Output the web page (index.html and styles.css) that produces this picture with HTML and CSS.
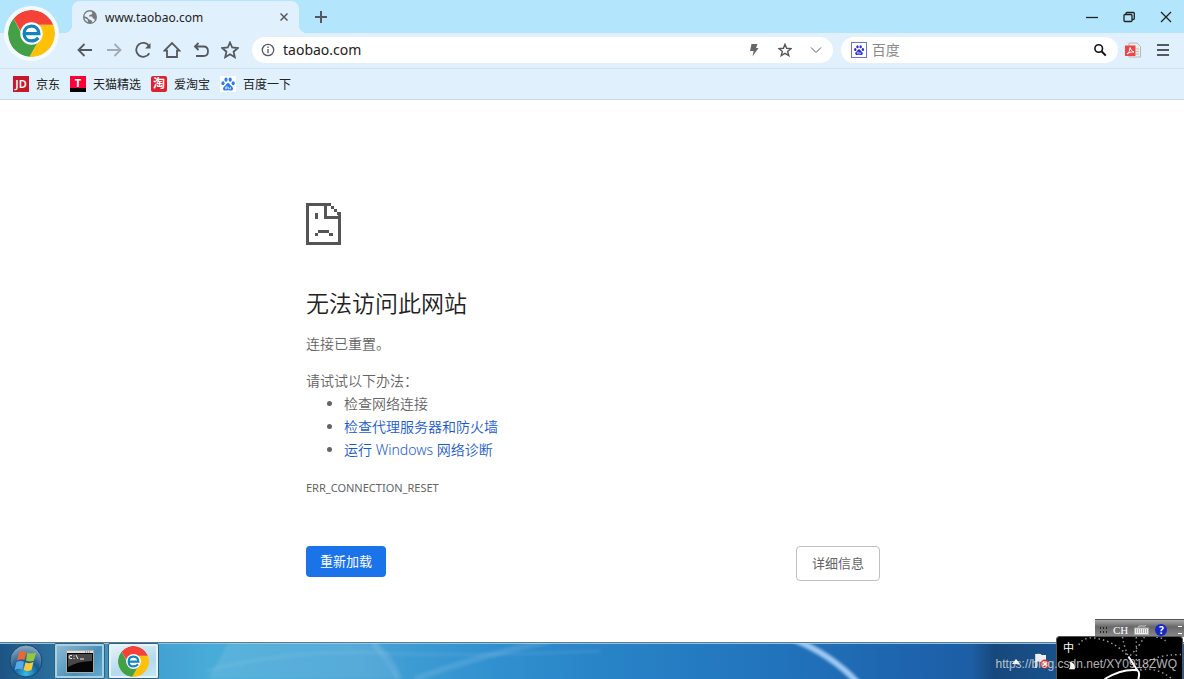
FILE: index.html
```html
<!DOCTYPE html>
<html lang="zh-CN">
<head>
<meta charset="utf-8">
<title>www.taobao.com</title>
<link rel="stylesheet" href="styles.css">
</head>
<body>
<svg class="defs" width="0" height="0" aria-hidden="true">
  <symbol id="browser-logo" viewBox="0 0 46 46">
    <path fill="#ffc107" d="M27 14.500H44.500A23 23 0 0 1 21 46L31 28Z"/>
    <path fill="#43a047" d="M5.500 8.200A23 23 0 0 0 21 46L31 28L13 23Z"/>
    <path fill="#f44336" d="M5.500 8.200A23 23 0 0 1 44.500 14.500H23L13 22Z"/>
    <circle cx="23" cy="23" r="11" fill="#fff"/>
    <path d="M15.500 23.200H30.200C30 18.400 27 15.800 23 15.800C18.600 15.800 15.800 18.800 15.800 23.200C15.800 27.800 19 30.300 23 30.300C25.800 30.300 28 29.200 29.700 27.300" fill="none" stroke="#1683bd" stroke-width="3.200"/>
  </symbol>
  <symbol id="paw" viewBox="0 0 16 16">
    <ellipse cx="3" cy="7.300" rx="1.600" ry="2"/><ellipse cx="6" cy="3.700" rx="1.600" ry="2.100"/>
    <ellipse cx="10.200" cy="3.700" rx="1.600" ry="2.100"/><ellipse cx="13.200" cy="7.300" rx="1.600" ry="2"/>
    <path d="M8 7C6.500 7 6 9 4.500 10.200C2 12 3 14.500 5.200 14.500C6.500 14.500 7 14.200 8 14.200S9.500 14.500 11 14.500C13.200 14.500 14 12 11.700 10.200C10 9 9.500 7 8 7Z"/>
    <path d="M7 10V12.800H5.500V11.300H7M8.600 11V12.800H10.500V11" fill="none" stroke="#fff" stroke-width=".7"/>
  </symbol>
</svg>
<div class="window">
  <header class="browser">
    <div class="tabs">
      <div class="tab">
        <svg class="globe" viewBox="0 0 14 14"><circle cx="7" cy="7" r="7" fill="#75797e"/><path fill="#e1f0fd" d="M8 1.500L9.500 3L8.500 4.500L6.500 5L6 6.500H9L10 8.500L11.500 9V11L9.500 12.500L8.500 10.500L5.500 9L4.500 7.500L1.500 6.300C1.500 3.500 4 1.200 8 1.500ZM1.500 8L4.500 9.500L5.200 12.300C3 11.500 1.800 10 1.500 8Z"/></svg>
        <span class="tab-title">www.taobao.com</span>
        <button class="plain tab-close" aria-label="关闭标签页"><svg viewBox="0 0 8 8"><path d="M.5.500L7.500 7.500M7.500.500L.5 7.500"/></svg></button>
      </div>
      <button class="plain new-tab" aria-label="新标签页"><svg viewBox="0 0 12 12"><path d="M6 0V12M0 6H12"/></svg></button>
      <div class="controls">
        <button class="plain" aria-label="最小化"><svg viewBox="0 0 12 12"><path d="M0 6.500H12"/></svg></button>
        <button class="plain" aria-label="还原"><svg viewBox="0 0 12 12"><rect x="1" y="3.500" width="8" height="7" rx="1"/><path d="M3 3.500V2.500Q3 1.500 4 1.500H10.500Q11.300 1.500 11.300 2.500V7.500Q11.300 8.500 10 8.500H9"/></svg></button>
        <button class="plain" aria-label="关闭"><svg viewBox="0 0 12 12"><path d="M1 1L11 11M11 1L1 11"/></svg></button>
      </div>
    </div>
    <div class="badge"><svg><use href="#browser-logo"/></svg></div>
    <div class="toolbar">
      <nav class="nav">
        <button class="plain" aria-label="后退"><svg viewBox="0 0 18 18"><path d="M16 9H3M8.500 3L2.500 9L8.500 15"/></svg></button>
        <button class="plain muted" aria-label="前进"><svg viewBox="0 0 18 18"><path d="M2 9H15M9.500 3L15.500 9L9.500 15"/></svg></button>
        <button class="plain" aria-label="刷新"><svg viewBox="0 0 18 18"><path d="M15.300 12.200A7 7 0 1 1 15.300 5.500"/><path d="M16.500 2V7.500H11Z" fill="#55595e" stroke="none"/></svg></button>
        <button class="plain" aria-label="主页"><svg viewBox="0 0 18 18"><path d="M1.500 9.700L9 2L16.500 9.700H14V16H4V9.700Z"/></svg></button>
        <button class="plain" aria-label="撤销"><svg viewBox="0 0 18 18"><path d="M6.500 2L3 5.500L6.500 9M3 5.500H11.500Q16 5.500 16 10.200T11.500 15H4"/></svg></button>
        <button class="plain" aria-label="收藏"><svg viewBox="0 0 18 18"><path d="M9 1.500L11.200 6.500L16.700 7.100L12.600 10.700L13.800 16.200L9 13.300L4.200 16.200L5.400 10.700L1.300 7.100L6.800 6.500Z"/></svg></button>
      </nav>
      <div class="field address">
        <svg class="info" viewBox="0 0 14 14"><circle cx="7" cy="7" r="5.700"/><path d="M7 6V10.200M7 3.500V5"/></svg>
        <input type="text" aria-label="地址" value="taobao.com">
        <button class="plain" aria-label="极速模式"><svg viewBox="0 0 14 14"><path d="M4.500 1H10.500L9 5H11.500L5.500 13.500L6.700 8H3Z" fill="#666" stroke="none"/></svg></button>
        <button class="plain" aria-label="添加收藏"><svg viewBox="0 0 14 14"><path d="M7 1.300L8.600 5.300L13 5.600L9.600 8.400L10.800 12.600L7 10.300L3.200 12.600L4.400 8.400L1 5.600L5.400 5.300Z" stroke-width="1.400"/></svg></button>
        <button class="plain chevron" aria-label="展开"><svg viewBox="0 0 14 14"><path d="M2 4.500L7 9.500L12 4.500" stroke-width="1"/></svg></button>
      </div>
      <div class="field search">
        <svg class="engine" viewBox="0 0 16 16"><rect x=".5" y=".5" width="15" height="15" fill="#fff" stroke="#6b70e6"/><use href="#paw" x="2" y="2" width="12" height="12" fill="#2529d8"/></svg>
        <input type="text" aria-label="搜索" placeholder="百度">
        <button class="plain find" aria-label="搜索"><svg viewBox="0 0 14 14"><circle cx="5.700" cy="5.500" r="3.800"/><path d="M8.500 8.300L12.800 12.600" stroke-width="2"/></svg></button>
      </div>
      <div class="extras">
        <button class="plain" aria-label="PDF"><svg viewBox="0 0 16 16"><path d="M4 1H12L15.500 4.500V15H4Z" fill="#eee" stroke="#b8b8b8"/><path d="M11 7H14M11 9.500H14M11 12H14" stroke="#bbb" stroke-width="1"/><rect x="0" y="3.500" width="10.500" height="10.500" fill="#ee4545" stroke="none"/><path d="M2 12Q5 10 5 5.500Q6 9.500 9 10Q5 9.500 2 12" stroke="#fff" stroke-width="1"/></svg></button>
        <button class="plain" aria-label="菜单"><svg viewBox="0 0 16 16"><path d="M2 3H14M2 8H14M2 13H14" stroke-width="2"/></svg></button>
      </div>
    </div>
    <nav class="bookmarks">
      <a href="#"><span class="mark jd">JD</span>京东</a>
      <a href="#"><span class="mark tmall">T</span>天猫精选</a>
      <a href="#"><span class="mark tao">淘</span>爱淘宝</a>
      <a href="#"><svg class="mark paw"><use href="#paw"/></svg>百度一下</a>
    </nav>
  </header>

  <main class="page">
    <div class="error">
      <svg class="sad" viewBox="0 0 103 125" preserveAspectRatio="none" shape-rendering="crispEdges">
        <path fill="#555" d="M0 0H73V9H61V40H103V125H0ZM9 9V116H94V49H52V9ZM73 9H82V18H73ZM82 18H91V27H82ZM91 27H103V40H94V35H91ZM26 31H35V49H26ZM35 81H69V90H35ZM26 90H35V99H26ZM69 90H78V99H69Z" fill-rule="evenodd"/>
      </svg>
      <h1>无法访问此网站</h1>
      <p>连接已重置。</p>
      <p class="hint">请试试以下办法：</p>
      <ul>
        <li>检查网络连接</li>
        <li><a href="#">检查代理服务器和防火墙</a></li>
        <li><a href="#">运行 Windows 网络诊断</a></li>
      </ul>
      <p class="code">ERR_CONNECTION_RESET</p>
      <div class="actions">
        <button class="reload">重新加载</button>
        <button class="details">详细信息</button>
      </div>
    </div>
  </main>

  <footer class="taskbar">
    <svg class="streaks" viewBox="0 0 1184 36" preserveAspectRatio="none">
      <defs><filter id="soft" x="-20%" y="-50%" width="140%" height="200%"><feGaussianBlur stdDeviation="1.500"/></filter></defs>
      <g filter="url(#soft)">
        <path d="M228 0H376L400 36H208Z" fill="#fff" opacity=".09"/>
        <path d="M205 28Q290 6 380 10T600 8" fill="none" stroke="#fff" stroke-width="3" opacity=".08"/>
        <path d="M373 0Q391 14 399 36" fill="none" stroke="#fff" stroke-width="7" opacity=".1"/>
        <path d="M415 36Q480 12 550 -2" fill="none" stroke="#fff" stroke-width="6" opacity=".11"/>
        <path d="M793 -4Q832 12 858 40" fill="none" stroke="#add4fa" stroke-width="6" opacity=".9"/>
      </g>
    </svg>
    <button class="plain start" aria-label="开始">
      <svg viewBox="0 0 34 34">
        <defs><radialGradient id="orb" cx=".5" cy=".9" r=".9"><stop offset="0" stop-color="#35bdea"/><stop offset=".45" stop-color="#17588f"/><stop offset="1" stop-color="#91afc4"/></radialGradient></defs>
        <circle cx="17" cy="17" r="16" fill="url(#orb)" stroke="#18466d" stroke-width="1"/>
        <g stroke="none">
          <path d="M10 8.500Q13 6.500 17 8L15.500 16Q12 14.500 8 16.500Z" fill="#f26531"/>
          <path d="M18.500 8.500Q22 10.500 27 8.500L25 16.500Q21 18.500 17 16.500Z" fill="#93c83e"/>
          <path d="M7.500 18Q11.500 16 15 17.700L13.300 25.500Q10 24 5.500 26Z" fill="#55a9ea"/>
          <path d="M16.500 18.200Q20 20.200 24.500 18L22.500 26Q18.500 28 14.700 26Z" fill="#fbc936"/>
        </g>
      </svg>
    </button>
    <button class="task" aria-label="命令提示符">
      <svg class="console" viewBox="0 0 28 23"><rect x=".5" y=".5" width="27" height="22" fill="#060606" stroke="#aaa"/><path d="M1 1H27V3H1Z" fill="#ddd"/><path d="M19 2H25" stroke="#667" stroke-dasharray="1 1"/><path d="M2 4H26V11Q12 11 2 17Z" fill="#484848"/><path d="M6 5.500Q3 5 3 7T6 8.500M8 5.500V6.500M8 8V9M10 5L12 9M14 9H18" fill="none" stroke="#eee"/></svg>
    </button>
    <button class="task active" aria-label="浏览器"><svg class="logo"><use href="#browser-logo"/></svg></button>
    <div class="tray">
      <svg class="up" viewBox="0 0 8 5"><path d="M0 5L4 0L8 5Z" fill="#fff"/></svg>
      <svg class="flag" viewBox="0 0 16 16"><path d="M2 1V15" stroke="#fff" stroke-width="1.500"/><path d="M2 1Q6 0 8 2H12V9H7Q5 8 2 9Z" fill="#eee"/><circle cx="11" cy="11" r="4.500" fill="#d92e25"/><path d="M9 9L13 13M13 9L9 13" stroke="#fff" stroke-width="1.500"/></svg>
    </div>
  </footer>

  <div class="langbar">
    <span class="grip"></span>
    <span class="lang">CH</span>
    <svg class="keys" viewBox="0 0 15 10"><path d="M4 3Q4 0 8 1T12 0" fill="none" stroke="#ccc"/><rect x=".5" y="3" width="14" height="6.500" fill="#eee" stroke="#aaa"/><path d="M2 5H13M2 7H13" stroke="#777" stroke-dasharray="1 1"/></svg>
    <span class="help">?</span>
    <span class="dash"></span>
  </div>
  <div class="ime">
    <svg viewBox="0 0 126 43" preserveAspectRatio="none">
      <g fill="none" stroke="#999" stroke-width="1.500" stroke-dasharray="1.500 3">
        <path d="M22 8Q26 0 38 1Q58 4 72 20M66 0Q68 14 78 32M80 0V30M88 0Q84 8 73 20M84 34Q92 18 125 18M100 0Q112 2 108 6M84 34Q100 30 116 43"/>
      </g>
      <path d="M48 43Q66 32 81 34Q76 26 72 20M81 34Q84 36 82 43" fill="none" stroke="#fff" stroke-width="2"/>
      <path d="M12 25Q19 26 18 33L12 33Q15 29 12 25Z" fill="#fff"/>
    </svg>
    <span>中</span>
  </div>
  <div class="watermark">https://blog.csdn.net/XY0918ZWQ</div>
</div>
</body>
</html>
```
FILE: styles.css
```css
* { box-sizing: border-box; }
body {
  margin: 0;
  font-family: "Noto Sans", "Noto Sans CJK SC", sans-serif;
  background: #fff;
}
svg { display: block; }
.defs { position: absolute; }
input, button { font-family: inherit; }
.plain {
  display: flex;
  align-items: center;
  justify-content: center;
  padding: 0;
  border: 0;
  background: none;
  flex: none;
}
.plain svg { fill: none; stroke: #55595e; stroke-width: 2; }

.window {
  position: relative;
  display: flex;
  flex-direction: column;
  min-height: 100vh;
  overflow: hidden;
}

/* Browser chrome */
.browser { position: relative; background: #e1f0fd; border-bottom: 1px solid #c9d9e6; }
.tabs {
  display: flex;
  height: 33px;
  padding: 1px 0 0 72px;
  background: #b3e5fc;
}
.tab {
  position: relative;
  display: flex;
  align-items: center;
  width: 227px;
  padding: 0 9px 0 11px;
  border-radius: 8px 8px 0 0;
  background: #e1f0fd;
}
.tab::before, .tab::after {
  content: "";
  position: absolute;
  bottom: 0;
  width: 8px;
  height: 8px;
}
.tab::before { right: 100%; background: radial-gradient(circle at 0 0, transparent 8px, #e1f0fd 8px); }
.tab::after { left: 100%; background: radial-gradient(circle at 100% 0, transparent 8px, #e1f0fd 8px); }
.globe { width: 14px; height: 14px; margin-right: 8px; }
.tab-title { flex: 1; font-size: 12px; color: #222; }
.tab-close { width: 12px; height: 16px; }
.tab-close svg { width: 8px; height: 8px; stroke-width: 1.5; }
.new-tab { width: 44px; }
.new-tab svg { width: 12px; height: 12px; }
.controls { display: flex; margin-left: auto; }
.controls button { width: 37px; }
.controls svg { width: 12px; height: 12px; stroke: #222; stroke-width: 1.3; }

.badge {
  position: absolute;
  left: 4px;
  top: 6px;
  padding: 4px;
  border-radius: 50%;
  background: #f3fbff;
}
.badge svg { width: 47px; height: 47px; border-radius: 50%; }

.toolbar {
  display: flex;
  align-items: center;
  gap: 8px;
  height: 36px;
  padding: 0 6px 2px 70px;
  border-bottom: 1px solid #d1e1ee;
}
.nav { display: flex; }
.nav button { width: 29px; height: 26px; }
.nav svg { width: 18px; height: 18px; stroke-width: 1.8; }
.muted { opacity: .45; }
.field {
  display: flex;
  align-items: center;
  height: 26px;
  min-width: 0;
  border-radius: 13px;
  background: #fff;
}
.field input {
  flex: 1;
  min-width: 0;
  padding: 0;
  border: 0;
  outline: 0;
  background: none;
  font-size: 14px;
  color: #222;
}
.field input::placeholder { color: #8a8a8a; opacity: 1; }
.field button { width: 31px; height: 26px; }
.field button svg { width: 14px; height: 14px; }
.address { flex: 570 1 0; padding: 0 1px 0 9px; }
.search { flex: 264 1 0; padding: 0 3px 0 10px; }
.info { width: 14px; height: 14px; margin-right: 8px; fill: none; stroke: #55595e; stroke-width: 1.3; }
.engine { width: 16px; height: 16px; margin-right: 5px; }
.find svg { stroke: #111; stroke-width: 1.6; }
.extras { display: flex; margin-left: -8px; }
.extras button { width: 30px; height: 26px; }
.extras svg { width: 16px; height: 16px; stroke-width: 1; }

.bookmarks { display: flex; align-items: center; gap: 10px; height: 30px; padding: 0 13px; }
.bookmarks a {
  display: flex;
  align-items: center;
  gap: 7px;
  font-size: 12px;
  color: #222;
  text-decoration: none;
}
.mark {
  width: 16px;
  height: 16px;
  line-height: 16px;
  text-align: center;
  color: #fff;
}
.jd { background: #c5182a; font-size: 11px; font-weight: 600; }
.tmall { background: linear-gradient(#ff0036 12px, #000 12px); font-size: 11px; line-height: 13px; font-weight: 700; }
.tao { background: #e0202f; border-radius: 2px; font-size: 12px; font-weight: 700; }
.paw { background: #fff; fill: #2b7cf0; }

/* Error page */
.page { flex: 1; padding: 103px 24px 61px 26px; }
.error {
  max-width: 574px;
  margin: 0 auto;
  font-size: 14px;
  line-height: 23px;
  color: #646464;
  font-weight: 350;
}
.sad { width: 35px; height: 42px; }
h1 {
  margin: 42px 0 12px;
  font-size: 23px;
  font-weight: 350;
  line-height: 33px;
  color: #222;
}
.error p { margin: 0; }
.error .hint { margin-top: 14px; }
.error ul { margin: 0 0 15px; padding-left: 38px; }
.error a { color: #1a5ad0; text-decoration: none; }
.error .code { font-size: 11px; font-weight: 400; }
.actions { display: flex; justify-content: space-between; align-items: flex-start; margin-top: 47px; }
.actions button { border-radius: 4px; font-size: 13px; line-height: 19px; }
.reload { padding: 6px 14px; border: 0; background: #1a73e8; color: #fff; }
.details { padding: 7px 15px; border: 1px solid #bdc1c6; background: #fff; color: #646464; }

/* Taskbar */
.taskbar {
  position: relative;
  display: flex;
  align-items: flex-start;
  gap: 3px;
  height: 37px;
  border-top: 1px solid #60798d;
  box-shadow: inset 0 1px #8fc4e6;
  background: linear-gradient(90deg, #1c5484, #2c719f 5%, #4292bd 9%, #43a3d3 14%, #48acd8 18%, #46a3d6 30%, #3090cf 42%, #2882c6 52%, #2173bb 66%, #1d62ac 78%, #1d5ea5 82%, #17487c 84%, #184f88 88%, #1d5d9c);
}
.streaks { position: absolute; inset: 0; width: 100%; height: 100%; }
.start { position: relative; width: 51px; height: 36px; }
.start svg { width: 34px; height: 34px; }
.task {
  position: relative;
  display: flex;
  align-items: center;
  justify-content: center;
  width: 51px;
  height: 36px;
  padding: 0;
  border: 1px solid #b4d3e5;
  border-radius: 2px;
  outline: 1px solid #2d6285;
  outline-offset: -1px;
  background: linear-gradient(135deg, #91bdd5, #4a8fb8 60%, #61add2);
  box-shadow: inset 0 0 0 2px #a9cfe2;
}
.active { background: linear-gradient(160deg, #eaf4fa, #b5d9eb 60%, #c3e8f5); box-shadow: inset 0 0 0 2px #e5f4fb; }
.console { width: 28px; height: 23px; }
.logo { width: 31px; height: 31px; border-radius: 50%; }
.tray { position: relative; display: flex; align-items: center; gap: 14px; height: 36px; margin-left: auto; padding-right: 134px; }
.up { width: 8px; height: 5px; }
.flag { width: 16px; height: 16px; }

/* Input method windows floating over the desktop */
.langbar {
  position: absolute;
  right: 0;
  bottom: 42px;
  display: flex;
  align-items: center;
  gap: 6px;
  width: 89px;
  height: 18px;
  padding: 3px 2px 0 4px;
  border-top: 1px solid #555;
  background: linear-gradient(#aaa, #686868 40%, #898989);
}
.grip { flex: none; width: 8px; height: 8px; background: radial-gradient(circle, #222 1px, transparent 1px) 0 0 / 3px 4px; }
.lang { font: 11px "Liberation Serif", serif; color: #fff; }
.keys { flex: none; width: 15px; height: 10px; }
.help {
  flex: none;
  width: 12px;
  height: 12px;
  border-radius: 50%;
  background: #1626cc;
  color: #fff;
  font-size: 10px;
  font-weight: 700;
  line-height: 12px;
  text-align: center;
}
.dash { flex: none; width: 4px; height: 8px; margin-left: auto; border-top: 1px solid #fff; border-bottom: 1px solid #fff; }
.ime {
  position: absolute;
  right: 1px;
  bottom: 0;
  width: 127px;
  height: 43px;
  border: 1px solid #555;
  border-bottom: 0;
  border-radius: 4px 4px 0 0;
  background: #000;
  color: #fff;
  font-size: 11px;
  line-height: 16px;
  padding: 3px 6px;
}
.ime svg { position: absolute; inset: 0; width: 100%; height: 100%; }
.watermark {
  position: absolute;
  right: 7px;
  bottom: 7px;
  font: 12px/16px "Liberation Sans", Arial, sans-serif;
  color: rgba(225, 225, 225, .8);
}
```
